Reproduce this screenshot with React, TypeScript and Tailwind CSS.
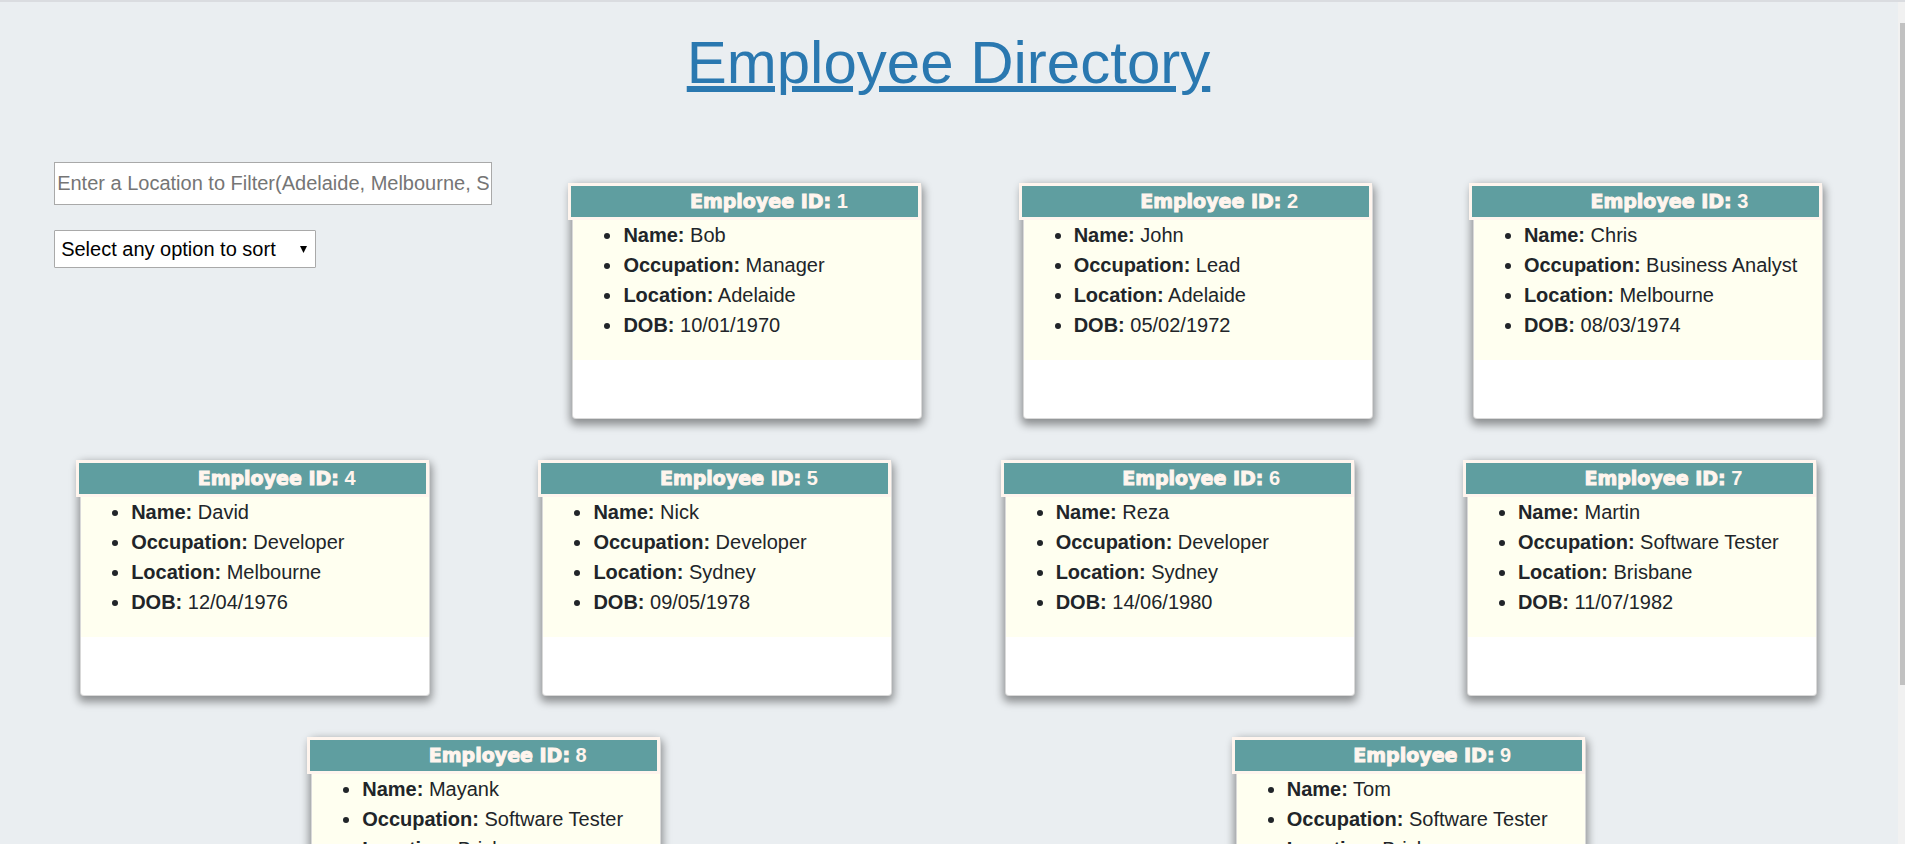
import { useState } from "react";

type Employee = {
  id: number;
  name: string;
  occupation: string;
  location: string;
  dob: string;
};

const employees: Employee[] = [
  { id: 1, name: "Bob", occupation: "Manager", location: "Adelaide", dob: "10/01/1970" },
  { id: 2, name: "John", occupation: "Lead", location: "Adelaide", dob: "05/02/1972" },
  { id: 3, name: "Chris", occupation: "Business Analyst", location: "Melbourne", dob: "08/03/1974" },
  { id: 4, name: "David", occupation: "Developer", location: "Melbourne", dob: "12/04/1976" },
  { id: 5, name: "Nick", occupation: "Developer", location: "Sydney", dob: "09/05/1978" },
  { id: 6, name: "Reza", occupation: "Developer", location: "Sydney", dob: "14/06/1980" },
  { id: 7, name: "Martin", occupation: "Software Tester", location: "Brisbane", dob: "11/07/1982" },
  { id: 8, name: "Mayank", occupation: "Software Tester", location: "Brisbane", dob: "10/08/1984" },
  { id: 9, name: "Tom", occupation: "Software Tester", location: "Brisbane", dob: "12/09/1986" },
];

type SortKey = "" | "name" | "occupation" | "location";

function EmployeeCard({ employee }: { employee: Employee }) {
  return (
    <article className="mx-[50px] mt-[21px] mb-5 h-[236px] w-[350px] shrink-0 rounded-[4px] border border-black/15 bg-white shadow-[0_4px_8px_2px_rgba(0,0,0,0.4)]">
      <h2 className="-mt-px -ml-[5px] h-[37px] border-[3px] border-[#fff5ee] bg-[#5f9ea0] pl-[48px] text-center leading-[30px] text-[#fff5ee]">
        <span className="font-['DejaVu_Sans',sans-serif] text-[19px] font-black [-webkit-text-stroke:1px_#fff5ee]">Employee ID:</span>{" "}
        <span className="font-bold">{employee.id}</span>
      </h2>
      <ul className="list-disc bg-[#fffff0] pb-5 pl-[50px] leading-[30px]">
        <li><b>Name:</b> {employee.name}</li>
        <li><b>Occupation:</b> {employee.occupation}</li>
        <li><b>Location:</b> {employee.location}</li>
        <li><b>DOB:</b> {employee.dob}</li>
      </ul>
    </article>
  );
}

export default function App() {
  const [filter, setFilter] = useState("");
  const [sortKey, setSortKey] = useState<SortKey>("");

  const shown = employees.filter((e) =>
    e.location.toLowerCase().startsWith(filter.trim().toLowerCase())
  );
  if (sortKey !== "") {
    shown.sort((a, b) => a[sortKey].localeCompare(b[sortKey]));
  }

  return (
    <div className="flex h-screen flex-col border-t-2 border-[#dadce0] bg-white pb-[2px] font-['Liberation_Sans',Arial,sans-serif] text-[20px] text-[#212529]">
      <div className="flex min-h-0 flex-1">
        <main className="min-w-0 flex-1 overflow-y-auto bg-[#eaeef1] pr-[25px] pl-6 [scrollbar-width:none]">
          <h1 className="pt-[25px] text-center text-[60px] leading-[72px] text-[#2a78b0] underline decoration-[6px] underline-offset-[3px]">
            Employee Directory
          </h1>
          <div className="mt-[63px] flex flex-wrap justify-around">
            <form className="flex w-[498px] flex-col items-start gap-[25px] px-[30px]">
              <input
                type="text"
                aria-label="Filter by location"
                value={filter}
                onChange={(e) => setFilter(e.target.value)}
                placeholder="Enter a Location to Filter(Adelaide, Melbourne, Sydney, Brisbane)"
                className="h-[43px] w-full border border-[#a9a9a9] bg-white px-0.5 placeholder:text-[#757575]"
              />
              <div className="relative">
                <select
                  aria-label="Sort employees"
                  value={sortKey}
                  onChange={(e) => setSortKey(e.target.value as SortKey)}
                  className="h-[38px] w-[262px] appearance-none rounded-[1px] border border-[#a9a9a9] bg-white pl-1.5 text-black"
                >
                  <option value="">Select any option to sort</option>
                  <option value="name">Name</option>
                  <option value="occupation">Occupation</option>
                  <option value="location">Location</option>
                </select>
                <svg className="pointer-events-none absolute top-4 right-[9px] h-[7px] w-[7px]" viewBox="0 0 7 7" aria-hidden="true">
                  <path d="M0 0H7L3.5 7Z" fill="#000" />
                </svg>
              </div>
            </form>
            {shown.map((employee) => (
              <EmployeeCard key={employee.id} employee={employee} />
            ))}
          </div>
        </main>
        <div className="w-[7px] shrink-0 bg-[#f1f1f1] pt-[21px] pl-[2px]" aria-hidden="true">
          <div className="h-[662px] bg-[#c1c1c1]" />
        </div>
      </div>
    </div>
  );
}
